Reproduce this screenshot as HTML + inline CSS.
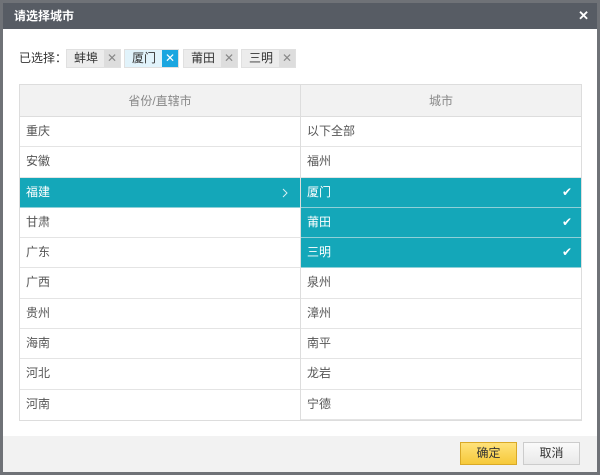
<!DOCTYPE html><html><head><meta charset="utf-8"><style>
*{margin:0;padding:0;box-sizing:border-box}
body{width:600px;height:475px;background:#6f7277;font-family:"Liberation Sans","Noto Sans CJK SC",sans-serif;font-size:12px;color:#333;position:relative;overflow:hidden}
.dlg{position:absolute;left:3px;top:3px;width:594px;height:469px;background:#fff}
.title{height:26px;background:#575c64;color:#fff;font-weight:bold;font-size:12px;line-height:26px;padding-left:11px;position:relative}
.title .x{position:absolute;right:8px;top:0;font-size:13px}
.sel{position:absolute;left:16px;top:46px;height:18px;line-height:18px}
.tag{position:absolute;top:46px;height:19px;background:#ececec;border:1px solid #e0e0e0;line-height:17px;padding-left:7px;font-size:12px}
.tag .c{position:absolute;right:0;top:0;width:16px;height:17px;background:#ddd;color:#888;text-align:center;font-size:12px}
.tag.on{background:#e1f3fb}.tag.on .c{background:#1aa6e0;color:#fff}
.panel{position:absolute;left:16px;top:81px;width:563px;height:337px;border:1px solid #ddd}
.col{position:absolute;top:0;height:335px}
.hd{height:32px;background:#f2f2f2;border-bottom:1px solid #ddd;text-align:center;line-height:32px;color:#888;font-size:12px}
.row{height:30.3px;line-height:29px;padding-left:6px;border-bottom:1px solid #e4e4e4;position:relative;color:#555}
.row.on{background:#14a7b9;color:#fff;border-bottom:1px solid #8fd0d8}
.ck{position:absolute;right:9px;top:0}
.ft{position:absolute;left:0;top:433px;width:594px;height:36px;background:#f2f2f2}
.btn{position:absolute;top:439px;height:23px;width:57px;text-align:center;line-height:21px;border:1px solid #ccc;background:linear-gradient(#fafafa,#e9e9e9)}
</style></head><body><div class="dlg">
<div class="title">请选择城市<span class="x">✕</span></div>
<div class="sel">已选择：</div>
<div class="tag" style="left:63px;width:55px">蚌埠<span class="c">✕</span></div>
<div class="tag on" style="left:121px;width:55px">厦门<span class="c">✕</span></div>
<div class="tag" style="left:180px;width:55px">莆田<span class="c">✕</span></div>
<div class="tag" style="left:238px;width:55px">三明<span class="c">✕</span></div>
<div class="panel">
<div class="col" style="left:0;width:281px;border-right:1px solid #ddd">
<div class="hd">省份/直辖市</div>
<div class="row">重庆</div><div class="row">安徽</div><div class="row on">福建<svg class="ck" style="top:10px;right:12px" width="6" height="10"><path d="M1 1L5 5L1 9" stroke="#d8f0f3" fill="none" stroke-width="1"/></svg></div><div class="row">甘肃</div><div class="row">广东</div><div class="row">广西</div><div class="row">贵州</div><div class="row">海南</div><div class="row">河北</div><div class="row" style="border:0">河南</div>
</div>
<div class="col" style="left:281px;width:280px">
<div class="hd">城市</div>
<div class="row">以下全部</div><div class="row">福州</div><div class="row on">厦门<span class="ck">✔</span></div><div class="row on">莆田<span class="ck">✔</span></div><div class="row on">三明<span class="ck">✔</span></div><div class="row">泉州</div><div class="row">漳州</div><div class="row">南平</div><div class="row">龙岩</div><div class="row">宁德</div>
</div></div>
<div class="ft"></div>
<div class="btn" style="left:457px;background:linear-gradient(#ffe27a,#f6c93a);border-color:#d9a927">确定</div>
<div class="btn" style="left:520px">取消</div>
</div></body></html>
